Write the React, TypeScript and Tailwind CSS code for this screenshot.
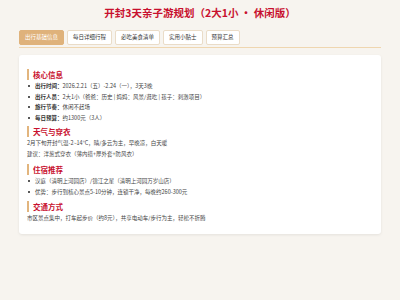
const tabs = ["出行基础信息", "每日详细行程", "必吃美食清单", "实用小贴士", "预算汇总"];

function Heading({ children }: { children: React.ReactNode }) {
  return (
    <div className="flex items-center h-[11px] border-l-2 border-[#e2b57e] pl-[4px]">
      <span className="text-[7.5px] font-bold text-[#c8102e] leading-none">{children}</span>
    </div>
  );
}

function Dot() {
  return <span className="w-[2px] h-[2px] rounded-full bg-[#222] mr-[5px] shrink-0" />;
}

function Bullet({ label, text }: { label: string; text: string }) {
  return (
    <li className="flex items-center h-[10.75px] pl-[1px] whitespace-nowrap">
      <Dot />
      <span className="font-bold text-[#333]">{label}</span>
      <span className="text-[#444]">{text}</span>
    </li>
  );
}

function Line({ children }: { children: React.ReactNode }) {
  return <p className="flex items-center h-[10.75px] text-[#444] whitespace-nowrap">{children}</p>;
}

export default function App() {
  return (
    <div
      className="w-[400px] h-[300px] bg-[#f7f4ef] overflow-hidden"
      style={{ fontFamily: '"Noto Sans CJK SC", "Noto Sans", sans-serif' }}
    >
      <h1 className="h-[26px] flex items-center justify-center text-[10.5px] font-bold text-[#c8102e]">
        开封3天亲子游规划（2大1小 · 休闲版）
      </h1>

      <div className="mx-[19px] mt-[4px] pb-[2px] border-b border-[#efd6b0] flex gap-[3px]">
        {tabs.map((t, i) => (
          <div
            key={t}
            className={
              i === 0
                ? "h-[15px] px-[5px] flex items-center rounded-[2px] bg-[#dfb27b] border border-[#dfb27b] text-white text-[5.5px]"
                : "h-[15px] px-[5px] flex items-center rounded-[2px] bg-white border border-[#eadcc8] text-[#333] text-[5.5px]"
            }
          >
            {t}
          </div>
        ))}
      </div>

      <div className="mx-[19px] mt-[7px] bg-white rounded-[3px] shadow-[0_1px_3px_rgba(0,0,0,0.08)] px-[8px] pt-[14px] pb-[10.5px] text-[5.5px]">
        <Heading>核心信息</Heading>
        <ul className="mt-[0.5px]">
          <Bullet label="出行时间：" text="2026.2.21（五）-2.24（一），3天3晚" />
          <Bullet label="出行人员：" text="2大1小（爸爸：历史 | 妈妈：风景/逛吃 | 孩子：刺激项目）" />
          <Bullet label="旅行节奏：" text="休闲不赶场" />
          <Bullet label="每日预算：" text="约1300元（3人）" />
        </ul>

        <div className="mt-[2.5px]">
          <Heading>天气与穿衣</Heading>
        </div>
        <div className="mt-[1px]">
          <Line>2月下旬开封气温-2~14°C，晴/多云为主，早晚凉，白天暖</Line>
          <Line>建议：洋葱式穿衣（薄内搭+厚外套+防风衣）</Line>
        </div>

        <div className="mt-[4.5px]">
          <Heading>住宿推荐</Heading>
        </div>
        <ul className="mt-[1px]">
          <li className="flex items-center h-[10.75px] pl-[1px] text-[#444] whitespace-nowrap">
            <Dot />
            汉庭（清明上河园店）/锦江之星（清明上河园万岁山店）
          </li>
          <li className="flex items-center h-[10.75px] pl-[1px] text-[#444] whitespace-nowrap">
            <Dot />
            优势：步行到核心景点5-10分钟，连锁干净，每晚约260-300元
          </li>
        </ul>

        <div className="mt-[3.5px]">
          <Heading>交通方式</Heading>
        </div>
        <div className="mt-[1px]">
          <Line>市区景点集中，打车起步价（约8元），共享电动车/步行为主，轻松不折腾</Line>
        </div>
      </div>
    </div>
  );
}
